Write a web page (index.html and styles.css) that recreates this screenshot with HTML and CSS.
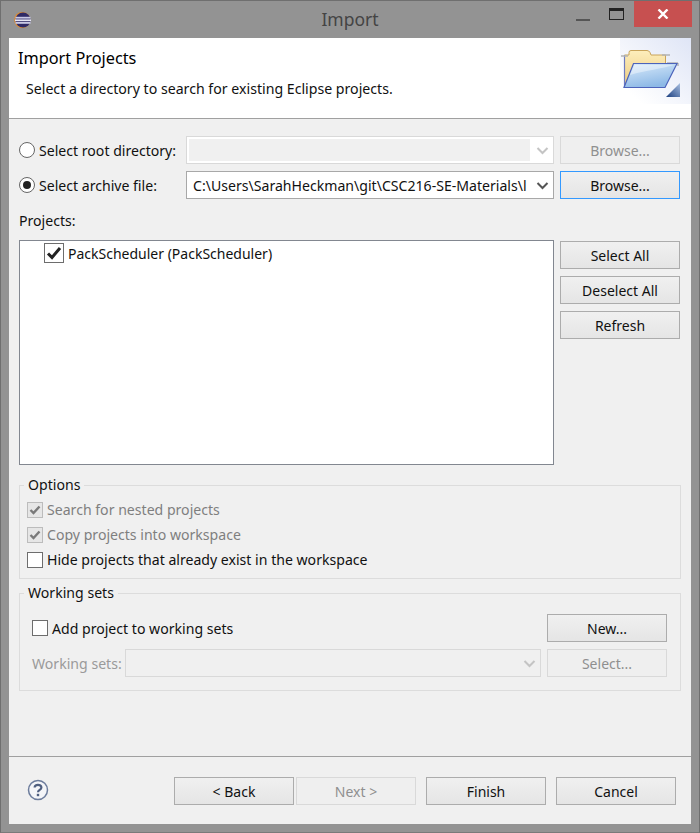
FILE: index.html
```html
<!DOCTYPE html>
<html lang="en">
<head>
<meta charset="utf-8">
<title>Import</title>
<link rel="stylesheet" href="styles.css">
</head>
<body>
<div class="window">
  <div class="titlebar">
    <svg class="app-icon" width="18" height="18" viewBox="0 0 18 18">
      <circle cx="9.2" cy="9" r="8" fill="#e08a2c"/>
      <circle cx="10" cy="9" r="7.6" fill="#2f2a66"/>
      <rect x="2.5" y="5.8" width="15" height="1.8" fill="#c9c9e4"/>
      <rect x="2" y="8.4" width="16" height="1.8" fill="#e6e6f4"/>
      <rect x="2.5" y="11" width="15" height="1.8" fill="#c9c9e4"/>
    </svg>
    <div class="title">Import</div>
    <div class="win-controls">
      <div class="minimize"></div>
      <div class="maximize"></div>
      <div class="close">
        <svg width="12" height="10" viewBox="0 0 12 10"><path d="M1.5 0.5 L10.5 9.5 M10.5 0.5 L1.5 9.5" stroke="#fff" stroke-width="2.4" fill="none"/></svg>
      </div>
    </div>
  </div>
  <div class="dialog">
    <header class="banner">
      <div class="banner-text">
        <h1 class="banner-title">Import Projects</h1>
        <p class="banner-desc">Select a directory to search for existing Eclipse projects.</p>
      </div>
      <div class="banner-art">
        <svg width="71" height="66" viewBox="0 0 71 66">
          <defs>
            <linearGradient id="artbg" x1="0" y1="1" x2="1" y2="0">
              <stop offset="0.15" stop-color="#ffffff"/>
              <stop offset="1" stop-color="#dfe5f6"/>
            </linearGradient>
            <linearGradient id="back" x1="0" y1="0" x2="0" y2="1">
              <stop offset="0" stop-color="#fdeebc"/>
              <stop offset="1" stop-color="#eccb80"/>
            </linearGradient>
            <linearGradient id="front" x1="0" y1="0" x2="0.4" y2="1">
              <stop offset="0" stop-color="#dcecfb"/>
              <stop offset="1" stop-color="#8db9e6"/>
            </linearGradient>
            <linearGradient id="tri" x1="0" y1="1" x2="1" y2="0">
              <stop offset="0" stop-color="#1c3f80"/>
              <stop offset="1" stop-color="#a9c0e2"/>
            </linearGradient>
          </defs>
          <rect width="71" height="66" fill="url(#artbg)"/>
          <path d="M4.500 48 V17 H9 V14.500 Q9 12.500 11 12.500 H27 Q29 12.500 30 14.500 L31 17 H45.500 V26 H14 L4.500 48 Z" fill="url(#back)" stroke="#c9a45a"/>
          <path d="M4.500 17 V49" stroke="#6f7cc0" stroke-width="1.200"/>
          <path d="M1 18 H8 M42 17 H50 M47 25 H58 M58 25 V28" stroke="#b4b4b4" stroke-width="1.500" fill="none"/>
          <path d="M13.500 25.500 H57 L45 49.500 H4 Z" fill="url(#front)" stroke="#4c63bb" stroke-width="1.200"/>
          <path d="M14.500 27 H54 C42 31 26 32 10 37 Z" fill="#ffffff" opacity="0.4"/>
          <path d="M46 59 L60 45 V59 Z" fill="url(#tri)"/>
        </svg>
      </div>
    </header>

    <main class="body">
      <div class="source-row">
        <label class="radio-label"><span class="radio"></span>Select root directory:</label>
        <div class="combo is-disabled"><span class="combo-fill"></span><svg class="chev" width="13" height="8" viewBox="0 0 13 8"><path d="M1.500 1 L6.500 6 L11.500 1" fill="none" stroke="#c4c4c4" stroke-width="2"/></svg></div>
        <button class="btn is-disabled">Browse...</button>
      </div>
      <div class="source-row">
        <label class="radio-label"><span class="radio is-on"></span>Select archive file:</label>
        <div class="combo"><span class="combo-text">C:\Users\SarahHeckman\git\CSC216-SE-Materials\l</span><svg class="chev" width="13" height="8" viewBox="0 0 13 8"><path d="M1.500 1 L6.500 6 L11.500 1" fill="none" stroke="#555" stroke-width="2"/></svg></div>
        <button class="btn is-focus">Browse...</button>
      </div>

      <div class="projects-label">Projects:</div>
      <div class="projects-row">
        <div class="tree">
          <div class="tree-item">
            <span class="box box-tree"><svg width="16" height="14" viewBox="0 0 16 14"><path d="M2 7.500 L6 11.500 L14 2" fill="none" stroke="#222" stroke-width="3"/></svg></span>
            PackScheduler (PackScheduler)
          </div>
        </div>
        <div class="side-buttons">
          <button class="btn">Select All</button>
          <button class="btn">Deselect All</button>
          <button class="btn">Refresh</button>
        </div>
      </div>

      <fieldset class="group group-options">
        <legend class="legend">Options</legend>
        <div class="check-row is-disabled"><span class="box is-disabled"><svg width="12" height="10" viewBox="0 0 12 10"><path d="M1.500 5 L4.500 8 L10.500 1.500" fill="none" stroke="#7a7a7a" stroke-width="2.400"/></svg></span>Search for nested projects</div>
        <div class="check-row is-disabled"><span class="box is-disabled"><svg width="12" height="10" viewBox="0 0 12 10"><path d="M1.500 5 L4.500 8 L10.500 1.500" fill="none" stroke="#7a7a7a" stroke-width="2.400"/></svg></span>Copy projects into workspace</div>
        <div class="check-row"><span class="box"></span>Hide projects that already exist in the workspace</div>
      </fieldset>

      <fieldset class="group group-sets">
        <legend class="legend">Working sets</legend>
        <div class="sets-row">
          <div class="check-row"><span class="box"></span>Add project to working sets</div>
          <button class="btn">New...</button>
        </div>
        <div class="sets-row sets-row-second">
          <span class="sets-label">Working sets:</span>
          <div class="combo combo-sets is-disabled"><svg class="chev" width="13" height="8" viewBox="0 0 13 8"><path d="M1.500 1 L6.500 6 L11.500 1" fill="none" stroke="#c4c4c4" stroke-width="2"/></svg></div>
          <button class="btn is-disabled">Select...</button>
        </div>
      </fieldset>
    </main>

    <footer class="footer">
      <svg class="help" width="22" height="22" viewBox="0 0 22 22">
        <circle cx="11" cy="11" r="9.500" fill="#f4f5f8" stroke="#6c7c9c" stroke-width="1.500"/>
        <path d="M7.600 8.500 C7.600 4.900 14.400 4.900 14.400 8.500 C14.400 11 11 10.800 11 13.300" fill="none" stroke="#4f5f80" stroke-width="2.200"/>
        <rect x="9.800" y="14.800" width="2.400" height="2.400" fill="#4f5f80"/>
      </svg>
      <div class="footer-buttons">
        <button class="btn">&lt; Back</button>
        <button class="btn is-disabled">Next &gt;</button>
        <button class="btn btn-finish">Finish</button>
        <button class="btn btn-cancel">Cancel</button>
      </div>
    </footer>
  </div>
</div>
</body>
</html>
```
FILE: styles.css
```css
* { box-sizing: border-box; }
html, body { margin: 0; padding: 0; }
body {
  width: 700px;
  height: 833px;
  overflow: hidden;
  font-family: "Noto Sans", "Open Sans", "Liberation Sans", sans-serif;
  font-size: 14.1px;
  color: #111;
  background: #939393;
}
.window {
  width: 700px;
  height: 833px;
  display: flex;
  flex-direction: column;
  background: #939393;
  border: 1px solid #6f6f6f;
  border-bottom-color: #7a7a7a;
  padding: 0 8px 8px;
}
.titlebar {
  height: 37px;
  flex: none;
  display: flex;
  align-items: center;
  position: relative;
  margin-right: -8px;
}
.app-icon { margin: 0 0 0 4px; }
.title {
  position: absolute;
  left: 0;
  right: 8px;
  top: 6px;
  text-align: center;
  font-size: 17.5px;
  line-height: 24px;
  color: #444;
}
.win-controls {
  margin-left: auto;
  display: flex;
  align-items: flex-start;
  align-self: flex-start;
}
.minimize {
  width: 14px;
  height: 2px;
  margin: 18px 19px 0 0;
  background: #555;
}
.maximize {
  width: 15px;
  height: 12px;
  margin: 7px 10px 0 0;
  border: 1px solid #222;
  border-top-width: 3px;
}
.close {
  width: 58px;
  height: 26px;
  margin: 0 7px 0 0;
  background: #c75050;
  display: flex;
  align-items: center;
  justify-content: center;
}
.dialog {
  flex: 1;
  display: flex;
  flex-direction: column;
  background: #f0f0f0;
  min-height: 0;
}
.banner {
  height: 81px;
  flex: none;
  background: #fff;
  border-bottom: 1px solid #a0a0a0;
  display: flex;
  justify-content: space-between;
}
.banner-text { padding: 9px 0 0 9px; }
.banner-title {
  margin: 0;
  font-size: 16.3px;
  font-weight: 400;
  line-height: 22px;
  color: #000;
}
.banner-desc {
  margin: 10px 0 0 8px;
  font-size: 14.15px;
  line-height: 20px;
  color: #111;
}
.banner-art { height: 66px; }
.banner-art svg { display: block; }
.body {
  flex: 1;
  padding: 17px 10px 0;
  min-height: 0;
}
.source-row {
  display: flex;
  align-items: center;
  height: 28px;
  margin-bottom: 7px;
}
.radio-label {
  width: 167px;
  display: flex;
  align-items: center;
  gap: 4px;
  white-space: nowrap;
}
.radio {
  width: 16px;
  height: 16px;
  flex: none;
  border-radius: 50%;
  border: 1px solid #666;
  background: #fff;
  display: flex;
  align-items: center;
  justify-content: center;
}
.radio.is-on::after {
  content: "";
  width: 8px;
  height: 8px;
  border-radius: 50%;
  background: #222;
}
.combo {
  width: 368px;
  height: 28px;
  flex: none;
  border: 1px solid #a8a8a8;
  background: #fff;
  display: flex;
  align-items: center;
  position: relative;
  padding-left: 6px;
  overflow: hidden;
  white-space: nowrap;
}
.combo.is-disabled { border-color: #d9d9d9; }
.combo-sets.is-disabled { background: #f0f0f0; }
.combo-fill {
  width: 341px;
  height: 22px;
  margin-left: -4px;
  background: #f0f0f0;
}
.combo-text { width: 336px; overflow: hidden; }
.chev { position: absolute; right: 4px; top: 10px; }
.btn {
  width: 120px;
  height: 28px;
  flex: none;
  border: 1px solid #acacac;
  background: linear-gradient(#f0f0f0, #e5e5e5);
  font-family: inherit;
  font-size: 14px;
  color: #111;
  padding: 0;
}
.btn.is-disabled {
  border-color: #d9d9d9;
  background: #efefef;
  color: #8f8f8f;
}
.btn.is-focus { border-color: #3399ff; }
.source-row .btn { margin-left: 6px; }
.projects-label {
  height: 20px;
  line-height: 20px;
  margin-top: 12px;
}
.projects-row {
  display: flex;
  height: 225px;
  margin-top: 9px;
}
.tree {
  width: 535px;
  flex: none;
  height: 225px;
  border: 1px solid #828790;
  background: #fff;
}
.tree-item {
  display: flex;
  align-items: center;
  gap: 4px;
  height: 24px;
  padding-left: 24px;
  white-space: nowrap;
  font-size: 14px;
  color: #111;
}
.box {
  width: 16px;
  height: 16px;
  flex: none;
  border: 1px solid #6d6d6d;
  background: #fff;
  display: flex;
  align-items: center;
  justify-content: center;
}
.box-tree { width: 20px; height: 20px; }
.box.is-disabled { border-color: #bcbcbc; background: #e6e6e6; }
.side-buttons {
  margin: 1px 0 0 6px;
  display: flex;
  flex-direction: column;
  gap: 7px;
}
.group {
  margin: 0;
  width: 662px;
  border: 1px solid #dcdcdc;
  padding: 0;
  min-width: 0;
}
.legend {
  padding: 0 4px;
  line-height: 20px;
}
.group-options .legend { margin-left: -3px; }
.group-sets .legend { margin-left: -8px; }
.group-options {
  margin-top: 10px;
  height: 104px;
  padding: 2px 7px 0;
}
.group-sets {
  margin-top: 4px;
  height: 108px;
  padding: 11px 13px 0 12px;
}
.check-row {
  display: flex;
  align-items: center;
  gap: 4px;
  height: 25px;
  white-space: nowrap;
}
.check-row.is-disabled { color: #7f7f7f; }
.sets-row {
  display: flex;
  align-items: center;
  justify-content: space-between;
  height: 28px;
}
.sets-row-second {
  margin-top: 7px;
  justify-content: flex-start;
}
.sets-label { width: 93px; color: #9a9a9a; white-space: nowrap; }
.combo-sets { width: 416px; }
.sets-row-second .btn { margin-left: 6px; }
.footer {
  height: 68px;
  flex: none;
  border-top: 1px solid #a0a0a0;
  display: flex;
  align-items: flex-start;
  padding: 20px 0 0 18px;
}
.help { flex: none; margin-top: 2px; }
.footer-buttons {
  display: flex;
  margin-left: 125px;
  gap: 2px;
}
.btn-finish, .btn-cancel { margin-left: 8px; }
```
